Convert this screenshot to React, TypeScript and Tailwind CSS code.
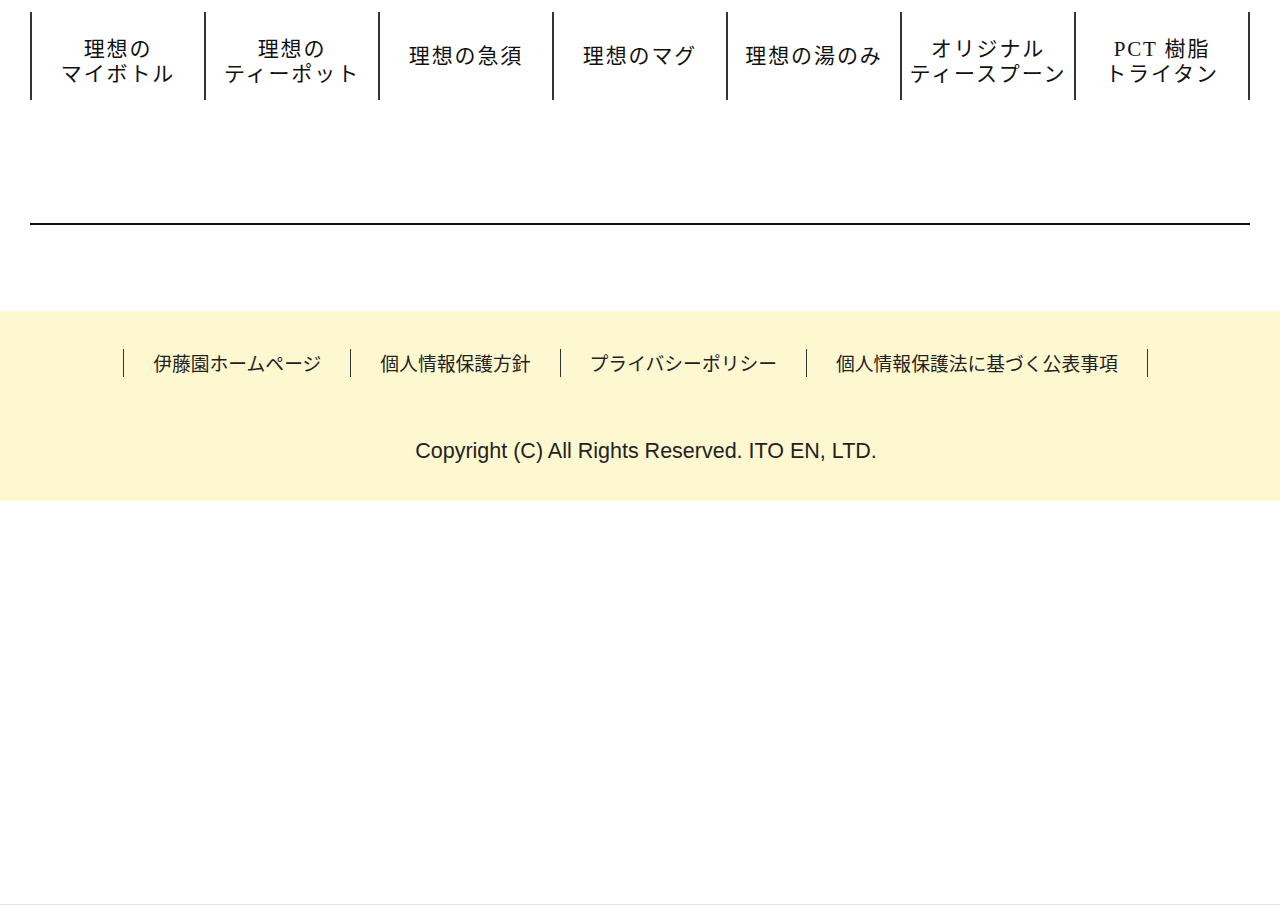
const items = [
  ['理想の', 'マイボトル'],
  ['理想の', 'ティーポット'],
  ['理想の急須'],
  ['理想のマグ'],
  ['理想の湯のみ'],
  ['オリジナル', 'ティースプーン'],
  ['PCT 樹脂', 'トライタン'],
];

const links = ['伊藤園ホームページ', '個人情報保護方針', 'プライバシーポリシー', '個人情報保護法に基づく公表事項'];

export default function App() {
  return (
    <div className="min-h-[905px] bg-white border-b border-[#e3e3e3] font-['Noto_Sans_CJK_JP',sans-serif] text-[#222]">
      <div className="px-[30px] pt-3">
        <ul className="grid grid-cols-7 border-r-2 border-[#333]">
          {items.map((lines, i) => (
            <li
              key={i}
              className={`h-[88px] flex flex-col items-center justify-center border-l-2 border-[#333] font-['Liberation_Serif','Noto_Sans_CJK_JP',serif] text-[21px] leading-[25px] tracking-[0.09em] text-[#111] ${lines.length > 1 ? 'pt-[11px]' : ''}`}
            >
              {lines.map((l) => (
                <span key={l}>{l}</span>
              ))}
            </li>
          ))}
        </ul>
        <div className="mt-[123px] h-[2px] bg-[#111]" />
      </div>

      <footer className="mt-[86px] h-[190px] bg-[#fef8d0] flex flex-col items-center">
        <ul className="mt-[38px] mr-[9px] flex border-r border-[#333]">
          {links.map((l) => (
            <li key={l} className="h-[28px] flex items-center border-l border-[#333] px-[29px] text-[18.8px] leading-none">
              {l}
            </li>
          ))}
        </ul>
        <p className="mt-[64px] ml-[12px] font-['Liberation_Sans',sans-serif] text-[21.5px] leading-none text-[#222]">
          Copyright (C) All Rights Reserved. ITO EN, LTD.
        </p>
      </footer>
    </div>
  );
}
